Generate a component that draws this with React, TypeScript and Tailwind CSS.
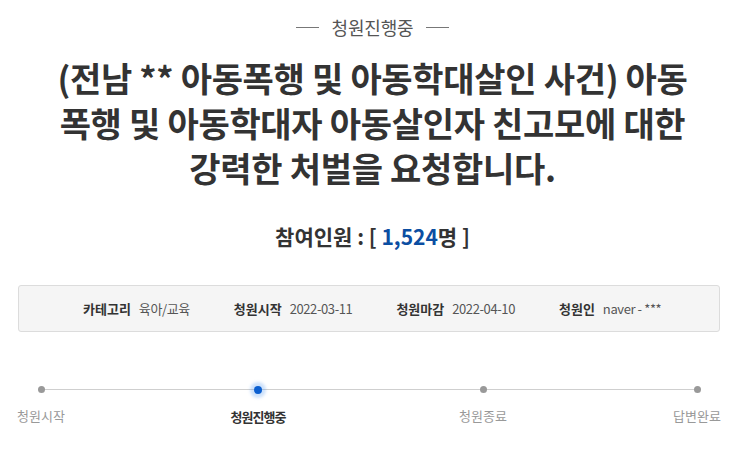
import React from "react";

const steps = [
  { label: "청원시작", active: false, gap: "" },
  { label: "청원진행중", active: true, gap: "ml-[157px]" },
  { label: "청원종료", active: false, gap: "ml-[165px]" },
  { label: "답변완료", active: false, gap: "ml-[154px]" },
];

const info = [
  { label: "카테고리", value: "육아/교육" },
  { label: "청원시작", value: "2022-03-11" },
  { label: "청원마감", value: "2022-04-10" },
  { label: "청원인", value: "naver - ***" },
];

export default function App() {
  return (
    <div
      className="w-[745px] h-[450px] bg-white overflow-hidden text-[#333]"
      style={{ fontFamily: '"Noto Sans CJK KR", "Noto Sans", sans-serif' }}
    >
      {/* 상태 */}
      <div className="flex items-center justify-center gap-[13px] pt-[14px] text-[18px] text-[#555] leading-[26px] tracking-[-0.2px]">
        <span className="w-[23px] h-px bg-[#777]" />
        <span>청원진행중</span>
        <span className="w-[23px] h-px bg-[#777]" />
      </div>

      {/* 제목 */}
      <h1 className="mt-[15px] px-[20px] text-center text-[34px] font-bold leading-[45px] tracking-[-0.3px] text-[#333]">
        (전남 ** 아동폭행 및 아동학대살인 사건) 아동
        <br />
        폭행 및 아동학대자 아동살인자 친고모에 대한
        <br />
        강력한 처벌을 요청합니다.
      </h1>

      {/* 참여인원 */}
      <div className="mt-[32px] text-center text-[21px] font-bold leading-[28px]">
        참여인원 : [ <span className="text-[#0b4ea2]">1,524</span>명 ]
      </div>

      {/* 정보 박스 */}
      <div className="ml-[18px] mr-[25px] mt-[35px] h-[47px] rounded-[3px] border border-[#dcdcdc] bg-[#f5f5f5] flex items-center pl-[64px] gap-[44px] text-[13px]">
        {info.map((item) => (
          <div key={item.label} className="flex items-center gap-[8px]">
            <span className="font-bold text-[#333]">{item.label}</span>
            <span className="text-[#555] tracking-[-0.4px]">{item.value}</span>
          </div>
        ))}
      </div>

      {/* 진행 단계 */}
      <div className="relative mt-[54px] flex pl-[11px]">
        <div className="absolute left-[40px] w-[657px] top-[3px] h-px bg-[#cfcfcf]" />
        {steps.map((s) => (
          <div key={s.label} className={`relative w-[60px] flex flex-col items-center ${s.gap}`}>
            {s.active ? (
              <span className="w-[8px] h-[8px] -mt-[0.5px] rounded-full bg-[#0b5fd0] shadow-[0_0_3px_4px_rgba(60,140,240,0.25)]" />
            ) : (
              <span className="w-[7px] h-[7px] rounded-full bg-[#999]" />
            )}
            <span
              className={`mt-[14px] text-[13px] leading-[18px] whitespace-nowrap ${
                s.active ? "font-bold text-[#333] tracking-[-1px]" : "text-[#999]"
              }`}
            >
              {s.label}
            </span>
          </div>
        ))}
      </div>
    </div>
  );
}
